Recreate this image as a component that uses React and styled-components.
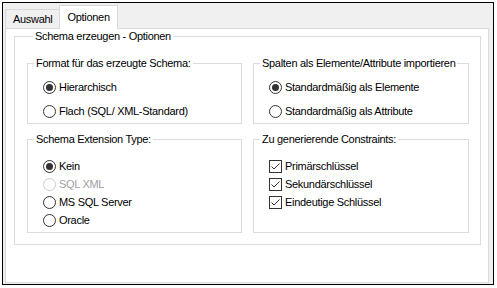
import React from "react";
import styled, { createGlobalStyle } from "styled-components";

const GlobalStyle = createGlobalStyle`
  body {
    margin: 0;
    background: #ffffff;
    font-family: "Liberation Sans", Arial, sans-serif;
    font-size: 11px;
    letter-spacing: -0.3px;
    color: #000000;
  }
`;

const Window = styled.div`
  margin: 2px 0 0 2px;
  width: 492px;
  height: 283px;
  box-sizing: border-box;
  border: 1px solid #000000;
  background: #f0f0f0;
  padding: 2px 4px 1px 2px;
  display: flex;
  flex-direction: column;
`;

const TabStrip = styled.div`
  display: flex;
  align-items: flex-end;
  height: 23px;
`;

const Tab = styled.div`
  box-sizing: border-box;
  display: flex;
  align-items: center;
  padding: 0 7px ${(p) => (p.$active ? "2px" : "0")} 7px;
  height: ${(p) => (p.$active ? "24px" : "19px")};
  margin-bottom: ${(p) => (p.$active ? "-1px" : "0")};
  border: 1px solid #d9d9d9;
  border-bottom: none;
  border-right: ${(p) => (p.$active ? "1px solid #d9d9d9" : "none")};
  background: ${(p) => (p.$active ? "#ffffff" : "#f0f0f0")};
  position: relative;
  z-index: ${(p) => (p.$active ? 1 : 0)};
`;

const Panel = styled.div`
  flex: 1;
  border: 1px solid #d9d9d9;
  background: #ffffff;
  padding: 7px 7px 0 8px;
`;

const Group = styled.div`
  border: 1px solid #dcdcdc;
  padding: ${(p) => p.$pad || "0"};
`;

const Legend = styled.div`
  width: fit-content;
  margin: -8px 0 0 6px;
  padding: 0 2px;
  line-height: 14px;
  height: 14px;
  background: #ffffff;
  white-space: nowrap;
`;

const Grid = styled.div`
  display: grid;
  grid-template-columns: 215px 216px;
  column-gap: 11px;
  row-gap: 15px;
  padding-top: 20px;
`;

const Options = styled.div`
  display: flex;
  flex-direction: column;
  gap: ${(p) => p.$gap}px;
  padding: ${(p) => p.$top}px 0 ${(p) => p.$bottom}px 15px;
`;

const Option = styled.div`
  display: flex;
  align-items: center;
  gap: 3px;
  height: ${(p) => p.$h}px;
  white-space: nowrap;
  color: ${(p) => (p.$disabled ? "#a0a0a0" : "#000000")};
`;

const Radio = styled.span`
  box-sizing: border-box;
  width: 13px;
  height: 13px;
  flex: none;
  border-radius: 50%;
  border: 1px solid ${(p) => (p.$disabled ? "#cccccc" : "#333333")};
  background: #ffffff;
  display: flex;
  align-items: center;
  justify-content: center;

  &::after {
    content: "";
    width: 7px;
    height: 7px;
    border-radius: 50%;
    background: #333333;
    display: ${(p) => (p.$checked ? "block" : "none")};
  }
`;

const Box = styled.span`
  box-sizing: border-box;
  width: 13px;
  height: 13px;
  flex: none;
  border: 1px solid #333333;
  background: #ffffff;
  display: flex;
`;

const RadioOption = ({ label, checked, disabled, h }) => (
  <Option $h={h} $disabled={disabled}>
    <Radio $checked={checked} $disabled={disabled} />
    {label}
  </Option>
);

const CheckOption = ({ label, h }) => (
  <Option $h={h}>
    <Box>
      <svg width="11" height="11" viewBox="0 0 11 11">
        <path d="M1.5 5.5 L4 8 L9.5 2.5" fill="none" stroke="#333333" strokeWidth="1" />
      </svg>
    </Box>
    {label}
  </Option>
);

export default function App() {
  return (
    <>
      <GlobalStyle />
      <Window>
        <TabStrip>
          <Tab>Auswahl</Tab>
          <Tab $active>Optionen</Tab>
        </TabStrip>
        <Panel>
          <Group $pad="0 11px 11px 12px">
            <Legend>Schema erzeugen - Optionen</Legend>
            <Grid>
              <Group>
                <Legend>Format für das erzeugte Schema:</Legend>
                <Options $gap={8} $top={9} $bottom={4}>
                  <RadioOption h={16} checked label="Hierarchisch" />
                  <RadioOption h={16} label="Flach (SQL/ XML-Standard)" />
                </Options>
              </Group>
              <Group>
                <Legend>Spalten als Elemente/Attribute importieren</Legend>
                <Options $gap={8} $top={9} $bottom={4}>
                  <RadioOption h={16} checked label="Standardmäßig als Elemente" />
                  <RadioOption h={16} label="Standardmäßig als Attribute" />
                </Options>
              </Group>
              <Group>
                <Legend>Schema Extension Type:</Legend>
                <Options $gap={0} $top={11} $bottom={3}>
                  <RadioOption h={18} checked label="Kein" />
                  <RadioOption h={18} disabled label="SQL XML" />
                  <RadioOption h={18} label="MS SQL Server" />
                  <RadioOption h={18} label="Oracle" />
                </Options>
              </Group>
              <Group>
                <Legend>Zu generierende Constraints:</Legend>
                <Options $gap={0} $top={11} $bottom={3}>
                  <CheckOption h={18} label="Primärschlüssel" />
                  <CheckOption h={18} label="Sekundärschlüssel" />
                  <CheckOption h={18} label="Eindeutige Schlüssel" />
                </Options>
              </Group>
            </Grid>
          </Group>
        </Panel>
      </Window>
    </>
  );
}
